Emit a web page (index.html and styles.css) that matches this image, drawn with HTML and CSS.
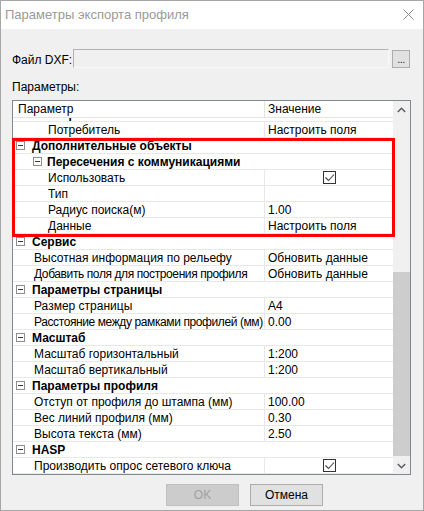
FILE: index.html
```html
<!DOCTYPE html>
<html lang="ru">
<head>
<meta charset="utf-8">
<title>Параметры экспорта профиля</title>
<link rel="stylesheet" href="styles.css">
</head>
<body>
<div class="window">
  <div class="titlebar">
    <span class="title">Параметры экспорта профиля</span>
    <svg class="close" width="11" height="11" viewBox="0 0 11 11"><path d="M0.5 0.5 L10.5 10.5 M10.5 0.5 L0.5 10.5" stroke="#8a8a8a" stroke-width="1" fill="none"/></svg>
  </div>
  <div class="content">
    <div class="file-row">
      <span class="file-label">Файл DXF:</span>
      <div class="input"></div>
      <div class="browse"><span>...</span></div>
    </div>
    <div class="params-label">Параметры:</div>
    <div class="grid">
      <div class="grid-main">
        <div class="header">
          <div class="name">Параметр</div>
          <div class="val">Значение</div>
        </div>
        <div class="rows">
          <div class="row group l1 cut"><div class="name"><span class="tg"></span>Потребитель</div></div>
          <div class="row leaf l2"><div class="name">Потребитель</div><div class="val">Настроить поля</div></div>
          <div class="row group l0"><div class="name"><span class="tg"></span>Дополнительные объекты</div></div>
          <div class="row group l1"><div class="name"><span class="tg"></span>Пересечения с коммуникациями</div></div>
          <div class="row leaf l2"><div class="name">Использовать</div><div class="val chkcell"><span class="chk"><svg width="11" height="11" viewBox="0 0 11 11"><path d="M1.5 5.5 L4.5 8.5 L10 2.5" stroke="#444" stroke-width="1.1" fill="none"/></svg></span></div></div>
          <div class="row leaf l2"><div class="name">Тип</div><div class="val"></div></div>
          <div class="row leaf l2"><div class="name">Радиус поиска(м)</div><div class="val">1.00</div></div>
          <div class="row leaf l2"><div class="name">Данные</div><div class="val">Настроить поля</div></div>
          <div class="row group l0"><div class="name"><span class="tg"></span>Сервис</div></div>
          <div class="row leaf l1"><div class="name">Высотная информация по рельефу</div><div class="val">Обновить данные</div></div>
          <div class="row leaf l1"><div class="name narrow">Добавить поля для построения профиля</div><div class="val">Обновить данные</div></div>
          <div class="row group l0"><div class="name"><span class="tg"></span>Параметры страницы</div></div>
          <div class="row leaf l1"><div class="name">Размер страницы</div><div class="val">A4</div></div>
          <div class="row leaf l1"><div class="name narrow">Расстояние между рамками профилей (мм)</div><div class="val">0.00</div></div>
          <div class="row group l0"><div class="name"><span class="tg"></span>Масштаб</div></div>
          <div class="row leaf l1"><div class="name">Масштаб горизонтальный</div><div class="val">1:200</div></div>
          <div class="row leaf l1"><div class="name">Масштаб вертикальный</div><div class="val">1:200</div></div>
          <div class="row group l0"><div class="name"><span class="tg"></span>Параметры профиля</div></div>
          <div class="row leaf l1"><div class="name">Отступ от профиля до штампа (мм)</div><div class="val">100.00</div></div>
          <div class="row leaf l1"><div class="name">Вес линий профиля (мм)</div><div class="val">0.30</div></div>
          <div class="row leaf l1"><div class="name">Высота текста (мм)</div><div class="val">2.50</div></div>
          <div class="row group l0"><div class="name"><span class="tg"></span>HASP</div></div>
          <div class="row leaf l1"><div class="name">Производить опрос сетевого ключа</div><div class="val chkcell"><span class="chk"><svg width="11" height="11" viewBox="0 0 11 11"><path d="M1.5 5.5 L4.5 8.5 L10 2.5" stroke="#444" stroke-width="1.1" fill="none"/></svg></span></div></div>
        </div>
      </div>
      <div class="scroll">
        <div class="sb-btn"><svg width="9" height="6" viewBox="0 0 9 6"><path d="M0.8 5 L4.5 1.3 L8.2 5" stroke="#606060" stroke-width="1.6" fill="none"/></svg></div>
        <div class="track"><div class="thumb"></div></div>
        <div class="sb-btn"><svg width="9" height="6" viewBox="0 0 9 6"><path d="M0.8 1 L4.5 4.7 L8.2 1" stroke="#606060" stroke-width="1.6" fill="none"/></svg></div>
      </div>
      <div class="highlight"></div>
    </div>
    <div class="buttons">
      <div class="btn disabled">OK</div>
      <div class="btn">Отмена</div>
    </div>
  </div>
</div>
</body>
</html>
```

FILE: styles.css
```css
* { box-sizing: border-box; }
html, body { margin: 0; padding: 0; }
body {
  width: 424px;
  height: 511px;
  overflow: hidden;
  background: #f0f0f0;
  font-family: "Liberation Sans", Arial, sans-serif;
  color: #000;
}
.window {
  width: 424px;
  height: 511px;
  border: 1px solid #a6a6a6;
  background: #f0f0f0;
  display: flex;
  flex-direction: column;
}
.titlebar {
  flex: none;
  height: 28px;
  background: #fff;
  display: flex;
  align-items: center;
  justify-content: space-between;
  padding: 0 9px 2px 4px;
}
.title {
  font-size: 13px;
  color: #9a9a9a;
}
.close { display: block; }
.content {
  flex: 1;
  padding: 0 12px 0 11px;
  display: flex;
  flex-direction: column;
}
.file-row {
  margin-top: 20px;
  height: 19px;
  display: flex;
  align-items: center;
}
.file-label {
  width: 61px;
  font-size: 12px;
  padding-top: 2px;
}
.input {
  width: 316px;
  height: 19px;
  border: 1px solid;
  border-color: #b4b4b4 #f8f8f8 #f8f8f8 #b4b4b4;
  background: #f0f0f0;
}
.browse {
  margin-left: 3px;
  margin-top: 1px;
  width: 18px;
  height: 18px;
  border: 1px solid #adadad;
  background: #e1e1e1;
  display: flex;
  align-items: center;
  justify-content: center;
  font-size: 11px;
  line-height: 1;
  color: #1a1a5a;
  letter-spacing: -0.5px;
}
.browse span { margin-top: 1px; }
.params-label {
  margin-top: 12px;
  font-size: 12px;
  line-height: 14px;
  height: 14px;
}
.grid {
  position: relative;
  margin-top: 6px;
  width: 399px;
  height: 375px;
  border: 1px solid #828790;
  background: #fff;
  display: flex;
}
.grid-main {
  width: 380px;
  display: flex;
  flex-direction: column;
  overflow: hidden;
}
.header {
  flex: none;
  height: 17px;
  display: flex;
  border-bottom: 1px solid #e3e3e3;
  font-size: 12px;
  padding-top: 1px;
  line-height: 15px;
  background: #fff;
  position: relative;
  z-index: 1;
}
.header .name { width: 251px; padding-left: 5px; }
.header .val { flex: 1; border-left: 1px solid #e3e3e3; padding-left: 3px; margin-top: -1px; padding-top: 1px; }
.rows {
  flex: 1;
  display: flex;
  flex-direction: column;
  overflow: hidden;
}
.row {
  flex: none;
  height: 16px;
  display: flex;
  border-bottom: 1px solid #e8e8e8;
  font-size: 12px;
  line-height: 14px;
  white-space: nowrap;
}
.row .name, .row .val { padding-top: 1px; }
.row.cut { margin-top: -12px; }
.row .name {
  width: 251px;
  overflow: hidden;
}
.row .name.narrow { letter-spacing: -0.4px; }
.row .val {
  flex: 1;
  border-left: 1px solid #e8e8e8;
  padding-left: 3px;
  overflow: hidden;
}
.row.leaf.l1 .name { padding-left: 21px; }
.row.leaf.l2 .name { padding-left: 35px; }
.row.group .name {
  width: auto;
  flex: 1;
  display: flex;
  align-items: center;
  font-weight: bold;
  padding-top: 0;
}
.row.group.l0 .name { padding-left: 3px; }
.row.group.l0 .tg { margin-right: 7px; }
.row.group.l1 .name { padding-left: 20px; }
.row.group.l1 .tg { margin-right: 5px; }
.tg {
  flex: none;
  position: relative;
  width: 9px;
  height: 9px;
  border: 1px solid #8e8e8e;
  background: #fff;
}
.tg::after {
  content: "";
  position: absolute;
  left: 1px;
  top: 3px;
  width: 5px;
  height: 1px;
  background: #3a3a3a;
}
.row .val.chkcell {
  padding: 0;
  display: flex;
  align-items: center;
  justify-content: center;
}
.chk {
  width: 13px;
  height: 13px;
  border: 1px solid #333;
  background: #fff;
  display: flex;
  align-items: center;
  justify-content: center;
}
.chk svg { display: block; }
.scroll {
  width: 17px;
  background: #f0f0f0;
  display: flex;
  flex-direction: column;
}
.sb-btn {
  flex: none;
  height: 17px;
  display: flex;
  align-items: center;
  justify-content: center;
}
.track { flex: 1; }
.thumb {
  margin-top: 154px;
  height: 184px;
  background: #cdcdcd;
}
.highlight {
  position: absolute;
  left: -1px;
  top: 37px;
  width: 383px;
  height: 99px;
  border: 3px solid #ff0000;
  pointer-events: none;
}
.buttons {
  margin-top: 9px;
  display: flex;
  gap: 11px;
  padding-left: 154px;
}
.btn {
  width: 73px;
  height: 22px;
  border: 1px solid #adadad;
  background: #e1e1e1;
  font-size: 12px;
  display: flex;
  align-items: center;
  justify-content: center;
}
.btn.disabled {
  border-color: #bfbfbf;
  background: #cccccc;
  color: #a0a0a0;
}
```
